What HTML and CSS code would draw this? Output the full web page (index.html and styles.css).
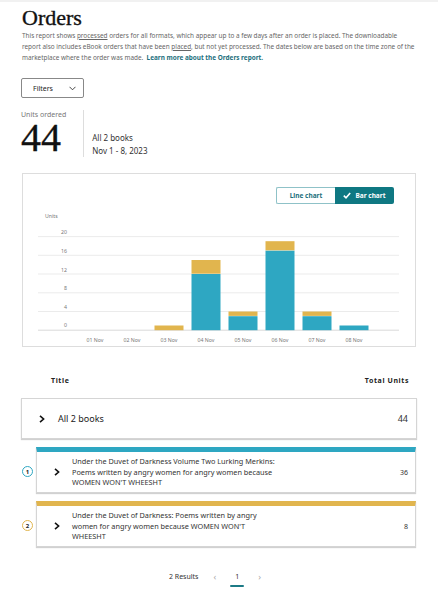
FILE: index.html
```html
<!DOCTYPE html>
<html lang="en">
<head>
<meta charset="utf-8">
<title>Orders</title>
<link rel="stylesheet" href="styles.css">
</head>
<body>
<div class="topline"></div>
<main class="page">
  <h1 class="title">Orders</h1>
  <p class="intro">This report shows <span class="ul">processed</span> orders for all formats, which appear up to a few days after an order is placed. The downloadable report also includes eBook orders that have been <span class="ul">placed</span>, but not yet processed. The dates below are based on the time zone of the marketplace where the order was made. &nbsp;<a class="link" href="#">Learn more about the Orders report.</a></p>

  <button class="filters" type="button">Filters
    <svg class="filters-chev" width="7" height="5" viewBox="0 0 7 5"><polyline points="0.5,0.8 3.5,3.8 6.5,0.8" fill="none" stroke="#333" stroke-width="0.9"/></svg>
  </button>

  <section class="stats">
    <div class="stats-left">
      <div class="stats-label">Units ordered</div>
      <div class="stats-num">44</div>
    </div>
    <div class="stats-right">
      <div>All 2 books</div>
      <div>Nov 1 - 8, 2023</div>
    </div>
  </section>

  <section class="chart-card">
    <div class="toggle-row">
      <div class="toggle">
        <span class="tg tg-line">Line chart</span>
        <span class="tg tg-bar"><svg class="check" width="8" height="7" viewBox="0 0 8 7"><polyline points="0.8,3.6 3,5.8 7.2,1" fill="none" stroke="#fff" stroke-width="1.6"/></svg>Bar chart</span>
      </div>
    </div>
    <svg class="chart" width="392" height="142" viewBox="0 0 392 142">
      <text class="axis-t" x="22" y="14">Units</text>
      <g class="grid">
        <line x1="15" x2="376" y1="32.6" y2="32.6"/>
        <line x1="15" x2="376" y1="51.3" y2="51.3"/>
        <line x1="15" x2="376" y1="70" y2="70"/>
        <line x1="15" x2="376" y1="88.8" y2="88.8"/>
        <line x1="15" x2="376" y1="107.5" y2="107.5"/>
      </g>
      <line class="base" x1="15" x2="376" y1="126.2" y2="126.2"/>
      <g class="ylab">
        <text x="44" y="30">20</text>
        <text x="44" y="48.8">16</text>
        <text x="44" y="67.5">12</text>
        <text x="44" y="86.2">8</text>
        <text x="44" y="105">4</text>
        <text x="44" y="123.4">0</text>
      </g>
      <g class="bars">
        <rect class="y" x="131.5" y="121.5" width="29" height="4.7"/>
        <rect class="b" x="168.5" y="70" width="29" height="56.2"/>
        <rect class="y" x="168.5" y="56" width="29" height="13.7"/>
        <rect class="b" x="205.5" y="112.2" width="29" height="14"/>
        <rect class="y" x="205.5" y="107.5" width="29" height="4.4"/>
        <rect class="b" x="242.5" y="46.6" width="29" height="79.6"/>
        <rect class="y" x="242.5" y="37.2" width="29" height="9.1"/>
        <rect class="b" x="279.5" y="112.2" width="29" height="14"/>
        <rect class="y" x="279.5" y="107.5" width="29" height="4.4"/>
        <rect class="b" x="316.5" y="121.5" width="29" height="4.7"/>
      </g>
      <g class="xlab">
        <text x="72" y="138">01 Nov</text>
        <text x="109" y="138">02 Nov</text>
        <text x="146" y="138">03 Nov</text>
        <text x="183" y="138">04 Nov</text>
        <text x="220" y="138">05 Nov</text>
        <text x="257" y="138">06 Nov</text>
        <text x="294" y="138">07 Nov</text>
        <text x="331" y="138">08 Nov</text>
      </g>
    </svg>
  </section>

  <div class="thead">
    <span>Title</span>
    <span>Total Units</span>
  </div>

  <div class="row-all">
    <svg class="chev" width="6" height="8" viewBox="0 0 6 8"><polyline points="1,0.8 4.6,4 1,7.2" fill="none" stroke="#111" stroke-width="1.6"/></svg>
    <span class="row-all-t">All 2 books</span>
    <span class="row-all-v">44</span>
  </div>

  <div class="books">
    <div class="book">
      <span class="badge badge-b">1</span>
      <div class="book-card card-b">
        <svg class="chev" width="6" height="8" viewBox="0 0 6 8"><polyline points="1,0.8 4.6,4 1,7.2" fill="none" stroke="#111" stroke-width="1.6"/></svg>
        <span class="book-t">Under the Duvet of Darkness Volume Two Lurking Merkins: Poems written by angry women for angry women because WOMEN WON'T WHEESHT</span>
        <span class="book-v">36</span>
      </div>
    </div>
    <div class="book">
      <span class="badge badge-y">2</span>
      <div class="book-card card-y">
        <svg class="chev" width="6" height="8" viewBox="0 0 6 8"><polyline points="1,0.8 4.6,4 1,7.2" fill="none" stroke="#111" stroke-width="1.6"/></svg>
        <span class="book-t">Under the Duvet of Darkness: Poems written by angry women for angry women because WOMEN WON'T WHEESHT</span>
        <span class="book-v">8</span>
      </div>
    </div>
  </div>

  <nav class="pager">
    <span class="results">2 Results</span>
    <span class="arrow">&lsaquo;</span>
    <span class="pg">1</span>
    <span class="arrow">&rsaquo;</span>
  </nav>
</main>
</body>
</html>
```

FILE: styles.css
```css
* { box-sizing: border-box; }
html, body { margin: 0; padding: 0; background: #fff; }
body {
  font-family: "Noto Sans", "Open Sans", sans-serif;
  color: #222;
}
.topline { height: 2px; background: #f1f1f1; }
.page { padding: 0 21px 20px 21px; }

.title {
  font-family: "Liberation Serif", "DejaVu Serif", serif;
  font-weight: normal;
  font-size: 22px;
  line-height: 24px;
  margin: 4px 0 0 1px;
  color: #111;
  -webkit-text-stroke: 0.35px #111;
}
.intro {
  margin: 0 0 0 1px;
  font-size: 6.4px;
  line-height: 11px;
  color: #666;
}
.ul { text-decoration: underline; }
.link { color: #1c6f7d; font-weight: bold; text-decoration: none; }

.filters {
  margin-top: 15px;
  width: 63px;
  height: 20px;
  border: 1px solid #888;
  border-radius: 2px;
  background: #fff;
  display: flex;
  align-items: center;
  padding: 0 0 0 11px;
  gap: 16px;
  font-family: inherit;
  font-size: 7px;
  color: #222;
}

.stats { display: flex; margin-top: 12px; }
.stats-left {
  padding-right: 17px;
  border-right: 1px solid #ddd;
  padding-bottom: 3px;
}
.stats-label { font-size: 7px; line-height: 10px; color: #777; }
.stats-num {
  font-family: "Liberation Serif", "DejaVu Serif", serif;
  font-size: 40px;
  line-height: 32px;
  margin-top: 2px;
  color: #111;
  -webkit-text-stroke: 0.3px #111;
}
.stats-right {
  align-self: flex-end;
  padding-left: 8px;
  font-size: 8px;
  line-height: 13px;
  color: #333;
}

.chart-card {
  margin: 16px 1px 0 1px;
  border: 1px solid #ddd;
  height: 174px;
}
.toggle-row { display: flex; justify-content: flex-end; padding: 13px 21px 0 0; }
.toggle { display: flex; height: 17px; }
.tg {
  width: 59px;
  display: flex;
  align-items: center;
  justify-content: center;
  font-size: 6.5px;
  font-weight: bold;
}
.tg-line {
  border: 1px solid #8fc2c8;
  border-right: none;
  border-radius: 2px 0 0 2px;
  color: #1c6f7d;
}
.tg-bar {
  background: #0f7882;
  color: #fff;
  border-radius: 0 2px 2px 0;
  gap: 4px;
}
.chart { display: block; }
.chart text { font-family: "Noto Sans", sans-serif; font-size: 5.2px; fill: #777; }
.grid line { stroke: #e6e6e6; stroke-width: 0.8; }
.base { stroke: #cfcfcf; stroke-width: 0.8; }
.ylab text { text-anchor: end; }
.xlab text { text-anchor: middle; }
.bars .b { fill: #2ea7c2; }
.bars .y { fill: #e1b54e; }

.thead {
  display: flex;
  justify-content: space-between;
  margin-top: 29px;
  padding: 0 8px 0 30px;
  font-size: 7px;
  line-height: 10px;
  font-weight: bold;
  letter-spacing: 0.6px;
  color: #222;
}

.row-all {
  margin-top: 12px;
  height: 41px;
  border: 1px solid #d5d5d5;
  box-shadow: 0 1px 1px rgba(0,0,0,0.18);
  display: flex;
  align-items: center;
  padding: 0 8px 0 17px;
  font-size: 9px;
  color: #222;
}
.row-all-t { margin-left: 13px; flex: 1; }
.row-all-v { color: #333; }

.books { margin-top: 8px; display: flex; flex-direction: column; gap: 8px; }
.book { display: flex; align-items: center; }
.badge {
  width: 11px;
  height: 11px;
  border-radius: 50%;
  border: 1.3px solid;
  margin: 3px 3px 0 1px;
  display: flex;
  align-items: center;
  justify-content: center;
  font-size: 6px;
  font-weight: bold;
  color: #222;
}
.badge-b { border-color: #2ea7c2; }
.badge-y { border-color: #e1b54e; }
.book-card {
  flex: 1;
  margin-right: 1px;
  height: 46px;
  border: 1px solid #d5d5d5;
  border-top-width: 5px;
  box-shadow: 0 1px 1px rgba(0,0,0,0.18);
  display: flex;
  align-items: center;
  padding: 0 7px 0 17px;
}
.card-b { border-top-color: #2ea7c2; }
.card-y { border-top-color: #e1b54e; }
.book-t {
  margin-left: 12px;
  width: 208px;
  font-size: 7.3px;
  line-height: 10.5px;
  color: #333;
}
.book-v { margin-left: auto; font-size: 7px; color: #333; }

.pager {
  margin-top: 24px;
  display: flex;
  justify-content: center;
  align-items: center;
  font-size: 7px;
  line-height: 12px;
  color: #333;
  padding-right: 8px;
}
.results { margin-right: 15px; }
.arrow { color: #aaa; font-size: 9px; }
.pg {
  width: 14px;
  margin: 0 14px;
  text-align: center;
  position: relative;
}
.pg::after {
  content: "";
  position: absolute;
  left: 0;
  right: 0;
  bottom: -4px;
  height: 2px;
  border-radius: 1px;
  background: #1c7a86;
}
```
